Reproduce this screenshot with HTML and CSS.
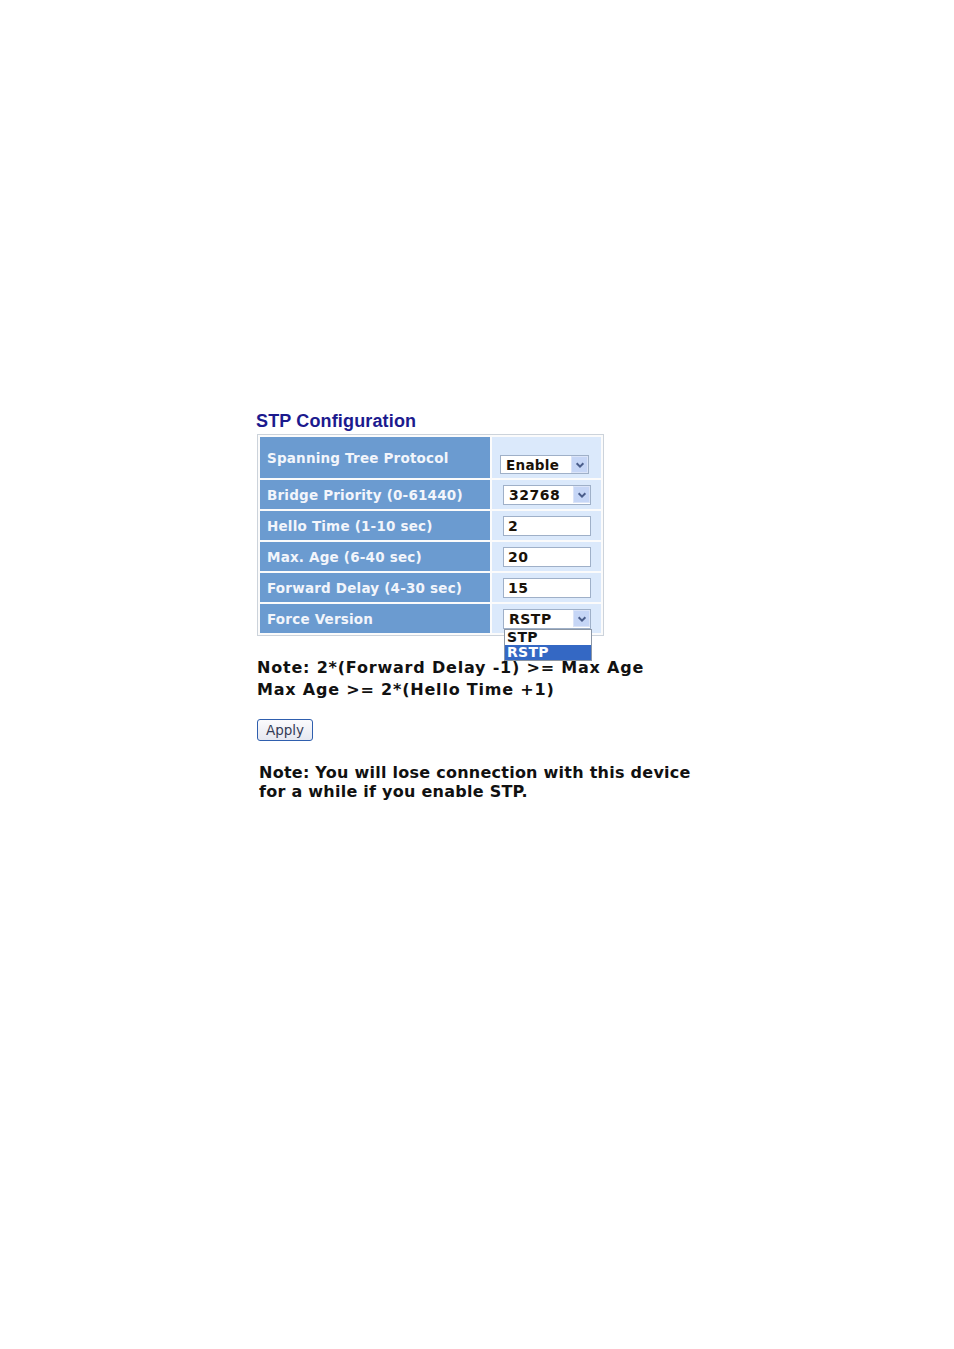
FILE: index.html
```html
<!DOCTYPE html>
<html>
<head>
<meta charset="utf-8">
<link rel="stylesheet" href="styles.css">
</head>
<body>
<div class="page">
  <h1 class="title">STP Configuration</h1>
  <table class="cfg">
    <tr class="tall">
      <td class="lbl">Spanning Tree Protocol</td>
      <td class="val val-bottom">
        <div class="sel sel-enable"><span class="sel-text">Enable</span><span class="sel-btn"><svg viewBox="0 0 10 10" width="12" height="12"><path d="M2.2 3.6 L5 6.4 L7.8 3.6" fill="none" stroke="#4a5d8a" stroke-width="1.7"/></svg></span></div>
      </td>
    </tr>
    <tr>
      <td class="lbl">Bridge Priority (0-61440)</td>
      <td class="val">
        <div class="sel"><span class="sel-text">32768</span><span class="sel-btn"><svg viewBox="0 0 10 10" width="12" height="12"><path d="M2.2 3.6 L5 6.4 L7.8 3.6" fill="none" stroke="#4a5d8a" stroke-width="1.7"/></svg></span></div>
      </td>
    </tr>
    <tr>
      <td class="lbl">Hello Time (1-10 sec)</td>
      <td class="val"><input class="txt" type="text" value="2"></td>
    </tr>
    <tr>
      <td class="lbl">Max. Age (6-40 sec)</td>
      <td class="val"><input class="txt" type="text" value="20"></td>
    </tr>
    <tr>
      <td class="lbl">Forward Delay (4-30 sec)</td>
      <td class="val"><input class="txt" type="text" value="15"></td>
    </tr>
    <tr>
      <td class="lbl">Force Version</td>
      <td class="val">
        <div class="sel sel-open"><span class="sel-text">RSTP</span><span class="sel-btn"><svg viewBox="0 0 10 10" width="12" height="12"><path d="M2.2 3.6 L5 6.4 L7.8 3.6" fill="none" stroke="#4a5d8a" stroke-width="1.7"/></svg></span>
          <ul class="dropdown">
            <li>STP</li>
            <li class="hl">RSTP</li>
          </ul>
        </div>
      </td>
    </tr>
  </table>
  <p class="note1">Note: 2*(Forward Delay -1) &gt;= Max Age<br>Max Age &gt;= 2*(Hello Time +1)</p>
  <button class="apply" type="button">Apply</button>
  <p class="note2">Note: You will lose connection with this device<br>for a while if you enable STP.</p>
</div>
</body>
</html>
```
FILE: styles.css
```css
html, body {
  margin: 0;
  padding: 0;
  background: #ffffff;
}

.page {
  padding: 410px 0 0 256px;
  font-family: "DejaVu Sans", Verdana, sans-serif;
}

.title {
  margin: 0 0 2px 0;
  font-family: "Liberation Sans", Arial, sans-serif;
  font-size: 18px;
  line-height: 22px;
  font-weight: bold;
  letter-spacing: 0.15px;
  color: #1c1a8e;
}

.cfg {
  border: 1px solid #ccd3db;
  border-spacing: 2px;
  background: #fbfbfb;
  margin-left: 1px;
}

.cfg td {
  padding: 0;
  height: 29px;
}

.cfg tr.tall td {
  height: 41px;
}

.cfg tr.tall td.val-bottom {
  height: 37px;
}

.lbl {
  width: 223px;
  padding-left: 7px !important;
  background: #6b9bd0;
  color: #f2f5fb;
  font-size: 13.5px;
  font-weight: bold;
  letter-spacing: 0.2px;
  white-space: nowrap;
  vertical-align: middle;
}

.val {
  width: 98px;
  padding-left: 11px !important;
  background: #dbe9fb;
  vertical-align: middle;
}

.val-bottom {
  vertical-align: bottom !important;
  padding-left: 8px !important;
  padding-bottom: 4px !important;
}

.sel {
  position: relative;
  display: flex;
  align-items: center;
  justify-content: space-between;
  box-sizing: border-box;
  width: 88px;
  height: 20px;
  border: 1px solid #9fb0c8;
  background: #ffffff;
  font-size: 14px;
  font-weight: bold;
  letter-spacing: 0.5px;
  color: #1a1208;
}

.sel-enable {
  width: 89px;
  height: 19px;
  font-size: 13.5px;
  letter-spacing: 0.3px;
}

.sel-text {
  padding-left: 5px;
  line-height: 18px;
}

.sel-btn {
  display: flex;
  align-items: center;
  justify-content: center;
  width: 17px;
  height: 17px;
  margin-right: 0;
  background: #c6d6f6;
  border: 1px solid #dbe4f8;
  box-sizing: border-box;
}

.txt {
  display: block;
  box-sizing: border-box;
  width: 88px;
  height: 20px;
  margin: 0;
  padding: 0 0 0 4px;
  border: 1px solid #9fb0c8;
  background: #ffffff;
  font-family: "DejaVu Sans", Verdana, sans-serif;
  font-size: 14px;
  font-weight: bold;
  letter-spacing: 0.5px;
  color: #1a1208;
}

.dropdown {
  position: absolute;
  left: 0;
  top: 19px;
  width: 88px;
  box-sizing: border-box;
  margin: 0;
  padding: 0;
  list-style: none;
  border: 1px solid #8c97a6;
  background: #ffffff;
  z-index: 5;
}

.dropdown li {
  height: 15px;
  line-height: 15px;
  padding-left: 2px;
  font-size: 14px;
  font-weight: bold;
  letter-spacing: 0.3px;
  color: #111111;
}

.dropdown li.hl {
  background: #3468c4;
  color: #ffffff;
}

.note1 {
  margin: 21px 0 0 1px;
  font-size: 16px;
  line-height: 22px;
  font-weight: bold;
  letter-spacing: 0.8px;
  color: #111111;
}

.apply {
  display: block;
  margin: 18px 0 0 1px;
  width: 56px;
  height: 22px;
  padding: 0;
  border: 1px solid #2f5fae;
  border-radius: 3px;
  background: linear-gradient(#fbfbfd, #e6e8f0);
  font-family: "DejaVu Sans", Tahoma, sans-serif;
  font-size: 13.5px;
  color: #333a55;
}

.note2 {
  margin: 22px 0 0 3px;
  font-size: 16px;
  line-height: 19px;
  font-weight: bold;
  letter-spacing: 0.25px;
  color: #111111;
}
```
